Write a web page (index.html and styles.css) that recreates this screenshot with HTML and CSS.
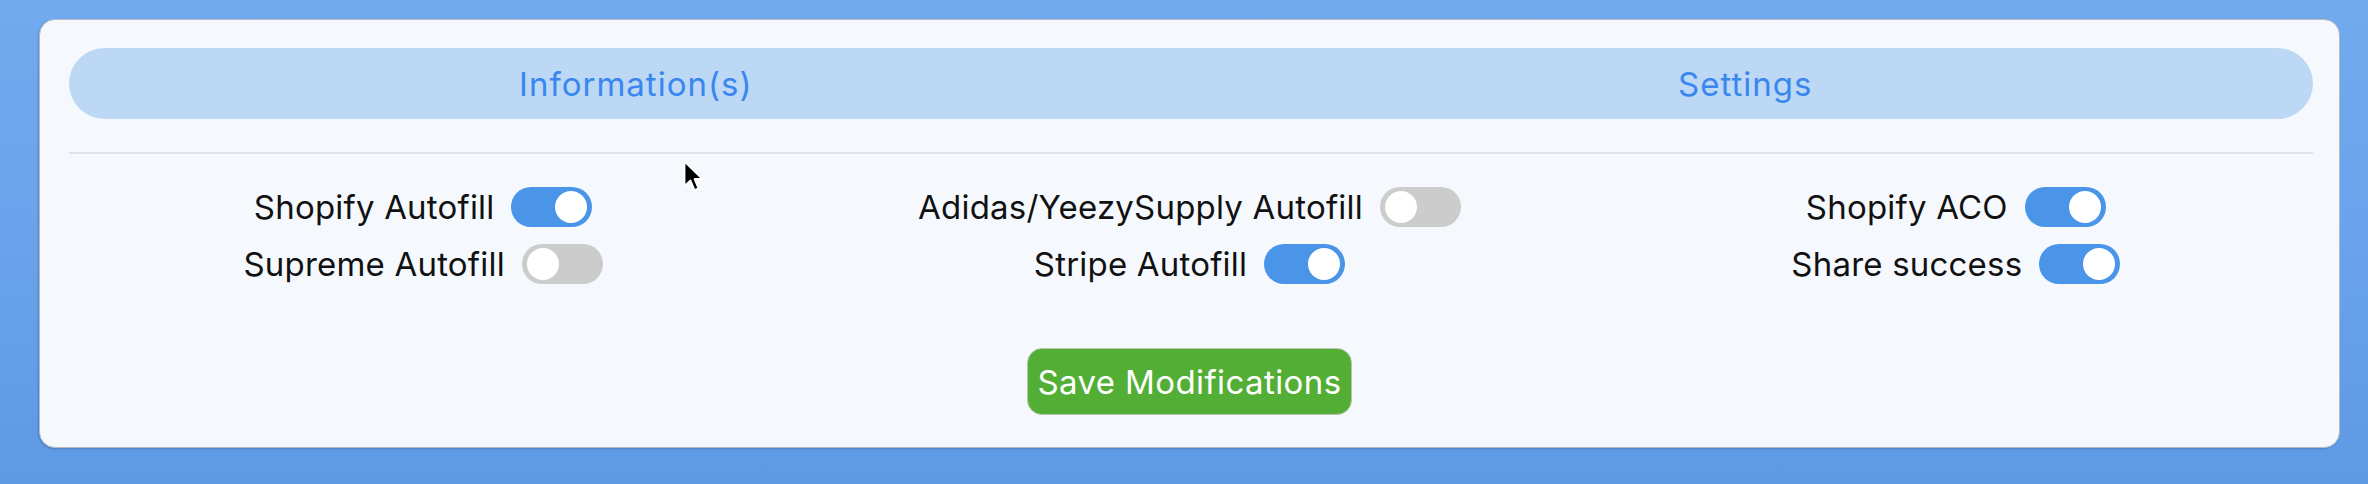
FILE: index.html
```html
<!DOCTYPE html>
<html lang="en">
<head>
<meta charset="utf-8">
<title>Settings</title>
<link rel="stylesheet" href="styles.css">
</head>
<body>
<div class="page">
  <div class="card">
    <div class="tabs">
      <div class="tab">Information(s)</div>
      <div class="tab">Settings</div>
    </div>
    <div class="divider"></div>
    <div class="options">
      <div class="col">
        <div class="opt"><span class="label">Shopify Autofill</span><span class="toggle on"><span class="knob"></span></span></div>
        <div class="opt"><span class="label">Supreme Autofill</span><span class="toggle"><span class="knob"></span></span></div>
      </div>
      <div class="col">
        <div class="opt"><span class="label">Adidas/YeezySupply Autofill</span><span class="toggle"><span class="knob"></span></span></div>
        <div class="opt"><span class="label">Stripe Autofill</span><span class="toggle on"><span class="knob"></span></span></div>
      </div>
      <div class="col">
        <div class="opt"><span class="label">Shopify ACO</span><span class="toggle on"><span class="knob"></span></span></div>
        <div class="opt"><span class="label">Share success</span><span class="toggle on"><span class="knob"></span></span></div>
      </div>
    </div>
    <div class="actions">
      <button class="save">Save Modifications</button>
    </div>
  </div>
  <svg class="cursor" width="22" height="34" viewBox="0 0 22 34" xmlns="http://www.w3.org/2000/svg">
    <path d="M1.5 1.5 L1.5 26 L7.5 20.5 L11.5 30 L15.5 28.3 L11.5 19 L19.5 19 Z" fill="#000" stroke="#fff" stroke-width="1.8" stroke-linejoin="round"/>
  </svg>
</div>
</body>
</html>
```
FILE: styles.css
```css
* { box-sizing: border-box; }
html, body { margin: 0; padding: 0; }
body {
  width: 2368px;
  height: 484px;
  overflow: hidden;
  background: linear-gradient(180deg, #72aaee 0%, #6aa3ec 50%, #5e99e4 100%);
  font-family: "Inter", "Noto Sans", sans-serif;
}
.page {
  position: relative;
  padding: 19px 28px 0 39px;
}
.card {
  width: 2301px;
  height: 429px;
  background: #f5f9fe;
  border: 1px solid #b7bcc3;
  border-radius: 16px;
  box-shadow: -1px 1px 2px rgba(0, 0, 0, 0.18);
  display: flex;
  flex-direction: column;
}
.tabs {
  margin: 28px 26px 0 29px;
  padding: 0 13px 0 12px;
  height: 71px;
  border-radius: 36px;
  background: #bcd8f4;
  display: flex;
}
.tab {
  flex: 1;
  display: flex;
  align-items: center;
  justify-content: center;
  color: #3a86ef;
  font-size: 33px;
  font-weight: 400;
  letter-spacing: 1px;
}
.divider {
  margin: 33px 26px 0 29px;
  height: 2px;
  background: #dfe3e8;
}
.options {
  display: grid;
  grid-template-columns: 1fr 1fr 1fr;
  margin-top: 33px;
}
.col {
  display: flex;
  flex-direction: column;
  align-items: center;
  gap: 17px;
}
.opt {
  display: flex;
  align-items: center;
  gap: 17px;
  height: 40px;
}
.label {
  font-size: 33px;
  color: #111;
  letter-spacing: 0.2px;
}
.toggle {
  position: relative;
  width: 81px;
  height: 40px;
  border-radius: 20px;
  background: #cccccc;
  flex: none;
}
.toggle.on { background: #4a95e8; }
.knob {
  position: absolute;
  top: 4px;
  left: 5px;
  width: 32px;
  height: 32px;
  border-radius: 50%;
  background: #fff;
}
.toggle.on .knob { left: 44px; }
.actions {
  display: flex;
  justify-content: center;
  margin-top: 64px;
}
.save {
  width: 325px;
  height: 67px;
  border: 1px solid #b8c4b2;
  border-radius: 15px;
  background: #53ae35;
  color: #fff;
  font-family: "Inter", "Noto Sans", sans-serif;
  font-size: 33px;
  font-weight: 400;
  letter-spacing: 0.4px;
  padding: 0;
}
.cursor {
  position: absolute;
  left: 683px;
  top: 160px;
}
```
